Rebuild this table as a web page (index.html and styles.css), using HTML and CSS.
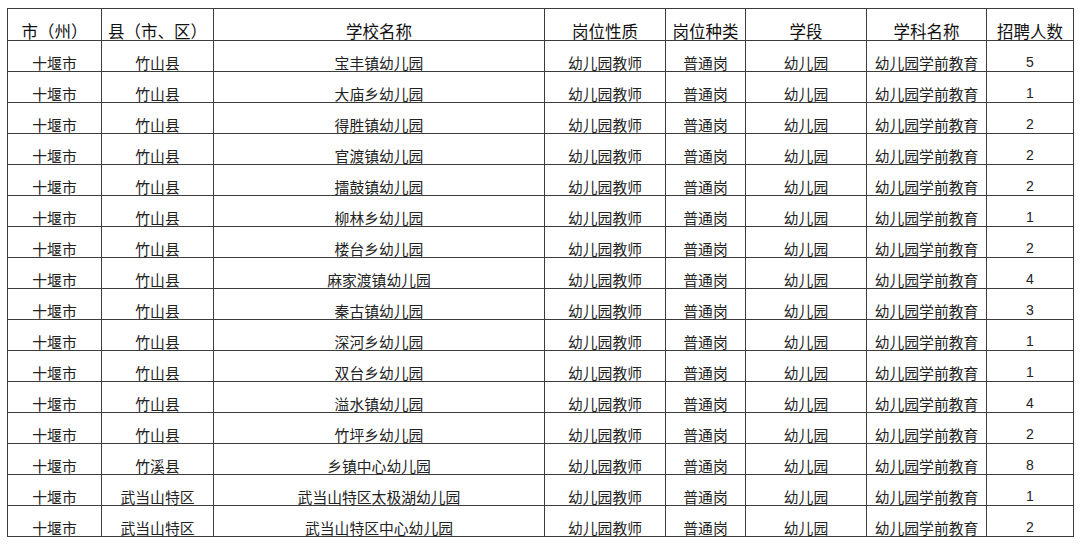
FILE: index.html
```html
<!DOCTYPE html>
<html lang="zh">
<head>
<meta charset="utf-8">
<link rel="stylesheet" href="styles.css">
</head>
<body>
<table class="t">
<colgroup>
<col class="c1"><col class="c2"><col class="c3"><col class="c4"><col class="c5"><col class="c6"><col class="c7"><col class="c8">
</colgroup>
<thead>
<tr class="hd"><th>市（州）</th><th>县（市、区）</th><th>学校名称</th><th>岗位性质</th><th>岗位种类</th><th>学段</th><th>学科名称</th><th>招聘人数</th></tr>
</thead>
<tbody>
<tr><td>十堰市</td><td>竹山县</td><td>宝丰镇幼儿园</td><td>幼儿园教师</td><td>普通岗</td><td>幼儿园</td><td>幼儿园学前教育</td><td class="n">5</td></tr>
<tr><td>十堰市</td><td>竹山县</td><td>大庙乡幼儿园</td><td>幼儿园教师</td><td>普通岗</td><td>幼儿园</td><td>幼儿园学前教育</td><td class="n">1</td></tr>
<tr><td>十堰市</td><td>竹山县</td><td>得胜镇幼儿园</td><td>幼儿园教师</td><td>普通岗</td><td>幼儿园</td><td>幼儿园学前教育</td><td class="n">2</td></tr>
<tr><td>十堰市</td><td>竹山县</td><td>官渡镇幼儿园</td><td>幼儿园教师</td><td>普通岗</td><td>幼儿园</td><td>幼儿园学前教育</td><td class="n">2</td></tr>
<tr><td>十堰市</td><td>竹山县</td><td>擂鼓镇幼儿园</td><td>幼儿园教师</td><td>普通岗</td><td>幼儿园</td><td>幼儿园学前教育</td><td class="n">2</td></tr>
<tr><td>十堰市</td><td>竹山县</td><td>柳林乡幼儿园</td><td>幼儿园教师</td><td>普通岗</td><td>幼儿园</td><td>幼儿园学前教育</td><td class="n">1</td></tr>
<tr><td>十堰市</td><td>竹山县</td><td>楼台乡幼儿园</td><td>幼儿园教师</td><td>普通岗</td><td>幼儿园</td><td>幼儿园学前教育</td><td class="n">2</td></tr>
<tr><td>十堰市</td><td>竹山县</td><td>麻家渡镇幼儿园</td><td>幼儿园教师</td><td>普通岗</td><td>幼儿园</td><td>幼儿园学前教育</td><td class="n">4</td></tr>
<tr><td>十堰市</td><td>竹山县</td><td>秦古镇幼儿园</td><td>幼儿园教师</td><td>普通岗</td><td>幼儿园</td><td>幼儿园学前教育</td><td class="n">3</td></tr>
<tr><td>十堰市</td><td>竹山县</td><td>深河乡幼儿园</td><td>幼儿园教师</td><td>普通岗</td><td>幼儿园</td><td>幼儿园学前教育</td><td class="n">1</td></tr>
<tr><td>十堰市</td><td>竹山县</td><td>双台乡幼儿园</td><td>幼儿园教师</td><td>普通岗</td><td>幼儿园</td><td>幼儿园学前教育</td><td class="n">1</td></tr>
<tr><td>十堰市</td><td>竹山县</td><td>溢水镇幼儿园</td><td>幼儿园教师</td><td>普通岗</td><td>幼儿园</td><td>幼儿园学前教育</td><td class="n">4</td></tr>
<tr><td>十堰市</td><td>竹山县</td><td>竹坪乡幼儿园</td><td>幼儿园教师</td><td>普通岗</td><td>幼儿园</td><td>幼儿园学前教育</td><td class="n">2</td></tr>
<tr><td>十堰市</td><td>竹溪县</td><td>乡镇中心幼儿园</td><td>幼儿园教师</td><td>普通岗</td><td>幼儿园</td><td>幼儿园学前教育</td><td class="n">8</td></tr>
<tr><td>十堰市</td><td>武当山特区</td><td>武当山特区太极湖幼儿园</td><td>幼儿园教师</td><td>普通岗</td><td>幼儿园</td><td>幼儿园学前教育</td><td class="n">1</td></tr>
<tr><td>十堰市</td><td>武当山特区</td><td>武当山特区中心幼儿园</td><td>幼儿园教师</td><td>普通岗</td><td>幼儿园</td><td>幼儿园学前教育</td><td class="n">2</td></tr>
</tbody>
</table>
</body>
</html>
```
FILE: styles.css
```css
html, body {
  margin: 0;
  padding: 0;
  background: #ffffff;
}
body {
  padding: 8px 7px;
  font-family: "Noto Sans CJK SC", "Noto Sans", sans-serif;
  color: #1a1a1a;
}
.t {
  border-collapse: collapse;
  table-layout: fixed;
  width: 1066px;
}
.c1 { width: 94px; }
.c2 { width: 112px; }
.c3 { width: 331px; }
.c4 { width: 121px; }
.c5 { width: 80px; }
.c6 { width: 121px; }
.c7 { width: 120px; }
.c8 { width: 87px; }
.t th, .t td {
  border: 1px solid #3c3c3c;
  padding: 0;
  text-align: center;
  vertical-align: bottom;
  white-space: nowrap;
}
.t th {
  height: 31px;
  font-size: 16.5px;
  font-weight: 400;
  line-height: 17px;
  color: #111;
}
.t td {
  height: 30px;
  font-size: 14.8px;
  line-height: 16px;
  color: #222;
}
.t td.n {
  font-family: "Liberation Sans", Arial, sans-serif;
  font-size: 14px;
  line-height: 17px;
}
```
